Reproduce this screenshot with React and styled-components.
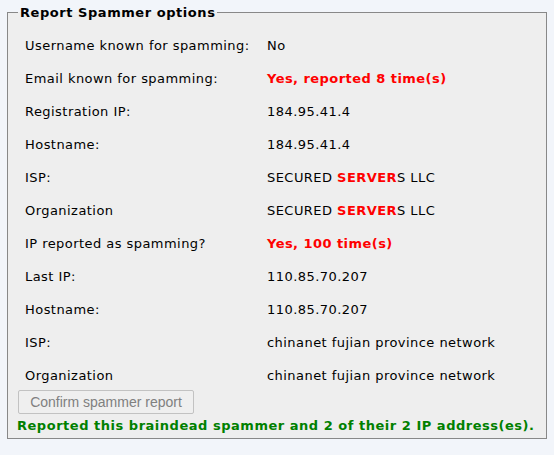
import React from "react";
import styled, { createGlobalStyle } from "styled-components";

const Global = createGlobalStyle`
  html, body { margin: 0; padding: 0; background: #f2f5fa; }
  body { font-family: "DejaVu Sans", Verdana, sans-serif; font-size: 13px; letter-spacing: 0.45px; color: #000; }
`;

const Page = styled.div`
  padding: 5px 7px 0 7px;
  width: 540px;
`;

const Fieldset = styled.fieldset`
  margin: 0;
  padding: 0 4px 5px 10px;
  border: 1px solid #888;
  background: #eeeeee;
`;

const Legend = styled.legend`
  font-weight: bold;
  font-size: 13px;
  letter-spacing: 0.55px;
  padding: 0 2px;
  margin-left: 0;
`;

const Table = styled.table`
  border-collapse: collapse;
  margin-top: 9px;
`;

const Row = styled.tr`
  height: 33px;
`;

const Label = styled.td`
  width: 242px;
  padding: 0 0 0 7px;
  vertical-align: middle;
`;

const Value = styled.td`
  padding: 0;
  vertical-align: middle;
  color: ${(p) => (p.$alert ? "#ff0000" : "#000")};
  font-weight: ${(p) => (p.$alert ? "bold" : "normal")};
`;

const Hot = styled.span`
  color: #ff0000;
  font-weight: bold;
`;

const Button = styled.button`
  font-family: "Liberation Sans", Arial, sans-serif;
  font-size: 14px;
  letter-spacing: 0;
  color: #808080;
  background: #efefef;
  border: 1px solid #c2c2c2;
  border-radius: 2px;
  height: 24px;
  width: 176px;
  padding: 0;
  margin: -2px 0 0 0;
  display: block;
`;

const Success = styled.div`
  color: #008000;
  font-weight: bold;
  font-size: 13px;
  letter-spacing: 0.52px;
  white-space: nowrap;
  margin: 4px 0 0 -1px;
`;

const rows = [
  ["Username known for spamming:", "No"],
  ["Email known for spamming:", "Yes, reported 8 time(s)", true],
  ["Registration IP:", "184.95.41.4"],
  ["Hostname:", "184.95.41.4"],
  ["ISP:", "servers"],
  ["Organization", "servers"],
  ["IP reported as spamming?", "Yes, 100 time(s)", true],
  ["Last IP:", "110.85.70.207"],
  ["Hostname:", "110.85.70.207"],
  ["ISP:", "chinanet fujian province network"],
  ["Organization", "chinanet fujian province network"],
];

export default function App() {
  return (
    <Page>
      <Global />
      <Fieldset>
        <Legend>Report Spammer options</Legend>
        <Table>
          <tbody>
            {rows.map(([l, v, alert], i) => (
              <Row key={i}>
                <Label>{l}</Label>
                <Value $alert={alert}>
                  {v === "servers" ? (
                    <>
                      SECURED <Hot>SERVER</Hot>S LLC
                    </>
                  ) : (
                    v
                  )}
                </Value>
              </Row>
            ))}
          </tbody>
        </Table>
        <Button disabled>Confirm spammer report</Button>
        <Success>Reported this braindead spammer and 2 of their 2 IP address(es).</Success>
      </Fieldset>
    </Page>
  );
}
